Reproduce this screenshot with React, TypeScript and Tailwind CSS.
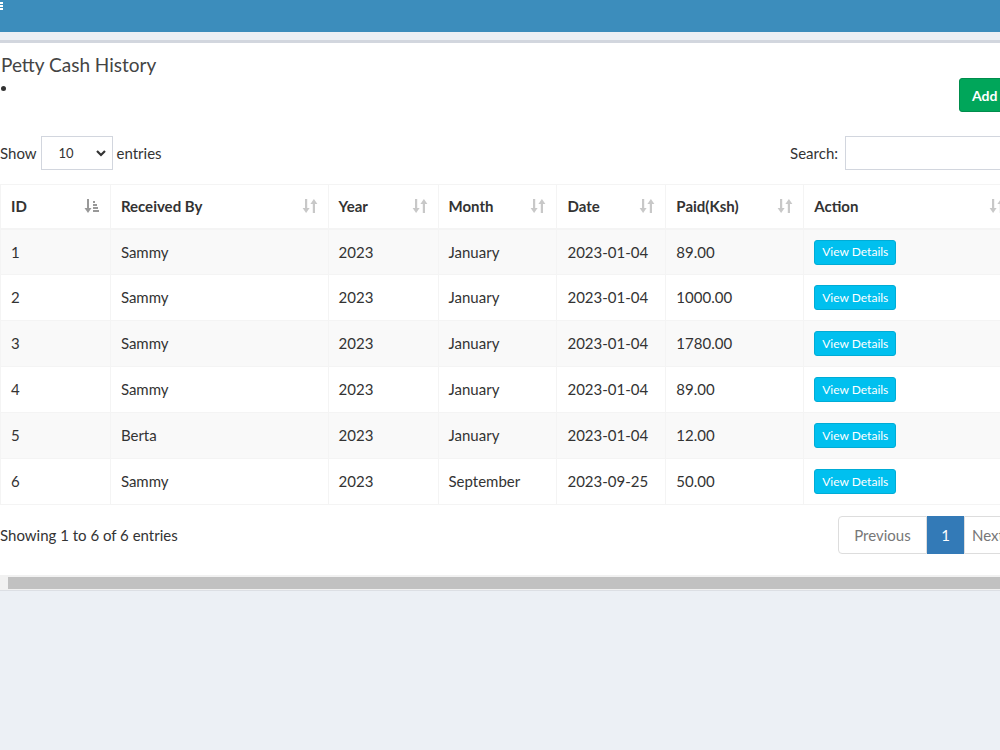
const ROWS = [
  { id: 1, by: "Sammy", year: "2023", month: "January", date: "2023-01-04", paid: "89.00" },
  { id: 2, by: "Sammy", year: "2023", month: "January", date: "2023-01-04", paid: "1000.00" },
  { id: 3, by: "Sammy", year: "2023", month: "January", date: "2023-01-04", paid: "1780.00" },
  { id: 4, by: "Sammy", year: "2023", month: "January", date: "2023-01-04", paid: "89.00" },
  { id: 5, by: "Berta", year: "2023", month: "January", date: "2023-01-04", paid: "12.00" },
  { id: 6, by: "Sammy", year: "2023", month: "September", date: "2023-09-25", paid: "50.00" },
];

const COLS = [
  { label: "ID", w: "w-[110px]", sorted: true },
  { label: "Received By", w: "w-[218px]" },
  { label: "Year", w: "w-[110px]" },
  { label: "Month", w: "w-[119px]" },
  { label: "Date", w: "w-[109px]" },
  { label: "Paid(Ksh)", w: "w-[138px]" },
  { label: "Action", w: "w-[212px]" },
];

function SortIcon({ active }: { active?: boolean }) {
  if (active) {
    // sort-amount-asc style
    return (
      <svg width="16" height="16" viewBox="0 0 16 16" fill="#999">
        <rect x="3" y="1" width="2" height="10" />
        <polygon points="0.5,10 7.5,10 4,15" />
        <rect x="9" y="3" width="2" height="2" />
        <rect x="9" y="6" width="4" height="2" />
        <rect x="9" y="9" width="5" height="2" />
        <rect x="9" y="12" width="6" height="2" />
      </svg>
    );
  }
  return (
    <svg width="16" height="16" viewBox="0 0 16 16" fill="#c8c8c8">
      <rect x="3" y="1" width="2.2" height="10" />
      <polygon points="0.6,10 7.6,10 4.1,15" />
      <rect x="10.8" y="5" width="2.2" height="10" />
      <polygon points="8.4,6 15.4,6 11.9,1" />
    </svg>
  );
}

export default function App() {
  return (
    <div
      className="w-[1000px] h-[750px] overflow-hidden bg-[#ecf0f5] text-[#333]"
      style={{ fontFamily: "Lato, 'Open Sans', sans-serif" }}
    >
      {/* Navbar */}
      <div className="h-[32px] bg-[#3c8dbc] relative">
        <div className="absolute left-0 top-[2px] flex flex-col gap-[1px]">
          <div className="w-[3px] h-[2px] bg-white" />
          <div className="w-[3px] h-[2px] bg-white" />
          <div className="w-[3px] h-[2px] bg-white" />
        </div>
      </div>

      <div className="h-[8px]" />

      {/* Box */}
      <div className="w-[1000px] overflow-hidden bg-white border-t-[3px] border-[#d2d6de]">
        <div className="w-[1016px]">
          <div className="pt-[10px] h-[93px] relative">
            <h3 className="text-[19px] leading-[24px] text-[#444] pl-[1px]">Petty Cash History</h3>
            <div className="mt-[9px] ml-[1px] w-[5px] h-[5px] rounded-full bg-[#333]" />
            <button className="absolute left-[959px] top-[35px] h-[34px] pl-[12px] pr-[12px] rounded-[3px] bg-[#00a65a] border border-[#008d4c] text-white text-[14px] font-bold flex items-center gap-[3px]">
              Add
              <span className="text-[12px]">+</span>
            </button>
          </div>

          <div className="flex items-center justify-between h-[34px] text-[15px]">
            <div className="flex items-center">
              <span>Show</span>
              <div className="ml-[4px] w-[72px] h-[34px] border border-[#d2d6de] flex items-center justify-between pl-[17px] pr-[5px] text-[13px]">
                <span className="mt-[2px]">10</span>
                <svg width="12" height="12" viewBox="0 0 12 12" fill="none" stroke="#333" strokeWidth="2.2">
                  <polyline points="2,4 6,8 10,4" />
                </svg>
              </div>
              <span className="ml-[4px]">entries</span>
            </div>
            <div className="flex items-center">
              <span>Search:</span>
              <div className="ml-[7px] w-[171px] h-[34px] border border-[#d2d6de]" />
            </div>
          </div>

          <table className="mt-[14px] border-collapse text-[15px]">
            <thead>
              <tr className="h-[44px] border-t border-[#f4f4f4]">
                {COLS.map((c) => (
                  <th
                    key={c.label}
                    className={`${c.w} border-x border-b-2 border-[#f4f4f4] text-left font-bold px-[10px]`}
                  >
                    <div className="flex items-center justify-between">
                      <span>{c.label}</span>
                      <SortIcon active={c.sorted} />
                    </div>
                  </th>
                ))}
              </tr>
            </thead>
            <tbody>
              {ROWS.map((r, i) => (
                <tr key={r.id} className={`h-[46px] ${i % 2 === 0 ? "bg-[#f9f9f9]" : "bg-white"}`}>
                  <td className="border border-[#f4f4f4] px-[10px]">{r.id}</td>
                  <td className="border border-[#f4f4f4] px-[10px]">{r.by}</td>
                  <td className="border border-[#f4f4f4] px-[10px]">{r.year}</td>
                  <td className="border border-[#f4f4f4] px-[10px]">{r.month}</td>
                  <td className="border border-[#f4f4f4] px-[10px]">{r.date}</td>
                  <td className="border border-[#f4f4f4] px-[10px]">{r.paid}</td>
                  <td className="border border-[#f4f4f4] px-[10px]">
                    <button className="h-[25px] px-[7px] rounded-[3px] bg-[#00c0ef] border border-[#00acd6] text-white text-[12px]">
                      View Details
                    </button>
                  </td>
                </tr>
              ))}
            </tbody>
          </table>

          <div className="flex items-center justify-between h-[60px] mb-[10px] text-[15px]">
            <span>Showing 1 to 6 of 6 entries</span>
            <div className="flex h-[38px] text-[15px] mr-[4px]">
              <div className="w-[89px] border border-[#ddd] rounded-l-[4px] flex items-center justify-center text-[#777]">
                Previous
              </div>
              <div className="w-[37px] bg-[#337ab7] text-white flex items-center justify-center">1</div>
              <div className="w-[48px] border border-[#ddd] rounded-r-[4px] flex items-center justify-center text-[#777]">
                Next
              </div>
            </div>
          </div>
        </div>
      </div>

      {/* Horizontal scrollbar */}
      <div className="h-[16px] bg-[#f1f1f1] pl-[8px] pt-[2px] pb-[1px] border-b border-[#dcdfe4]">
        <div className="h-full bg-[#c1c1c1]" />
      </div>
    </div>
  );
}
